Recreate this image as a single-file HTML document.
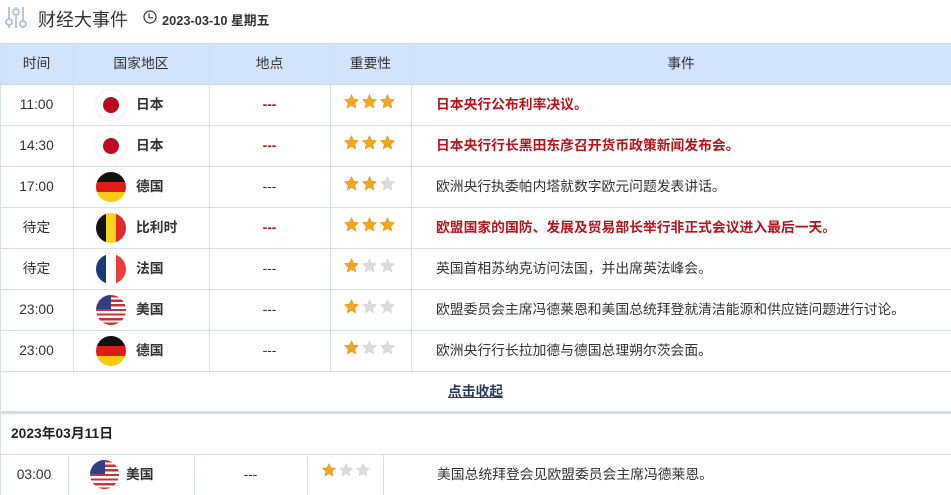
<!DOCTYPE html>
<html><head><meta charset="utf-8"><style>
*{margin:0;padding:0;box-sizing:border-box}
body{width:951px;height:495px;background:#fff;font-family:"Liberation Sans","Noto Sans CJK SC",sans-serif;font-size:13.8px;color:#333;position:relative;overflow:hidden}
.a{position:absolute}
.hl{position:absolute;left:0;width:951px;height:1px;background:#d6dfea}
.vl{position:absolute;width:1px;background:#d6dfea}
.c{position:absolute;text-align:center;line-height:41px;height:41px;white-space:nowrap}
.flag{position:absolute;width:30px;height:30px;border-radius:50%;overflow:hidden}
.red{color:#b4161b;font-weight:bold}
.st{position:absolute;width:52px;height:15px}
.o{fill:#f5a623;stroke:#e08d10;stroke-width:.6}.g{fill:#dcdcdc;stroke:#d0d0d0;stroke-width:.6}
</style></head><body>
<svg width="0" height="0" style="position:absolute"><defs><symbol id="s" viewBox="0 0 16 16"><path d="M8 .8l2.2 4.7 5.1.6-3.8 3.5 1 5.1L8 12.2l-4.5 2.5 1-5.1L.7 6.1l5.1-.6z"/></symbol></defs></svg>
<svg class="a" style="left:3px;top:3px" width="28" height="28" viewBox="0 0 28 28" fill="none" stroke="#a9b8d6" stroke-width="1.6">
<line x1="6" y1="4" x2="6" y2="16"/><circle cx="6" cy="19" r="3"/><line x1="6" y1="22" x2="6" y2="25"/>
<line x1="13" y1="4" x2="13" y2="6"/><circle cx="13" cy="9" r="3"/><line x1="13" y1="12" x2="13" y2="25"/>
<line x1="20" y1="4" x2="20" y2="18"/><circle cx="20" cy="21" r="3"/><line x1="20" y1="24" x2="20" y2="25"/>
</svg>
<div class="a" style="left:38px;top:6px;font-size:18px;color:#333">财经大事件</div>
<svg class="a" style="left:143px;top:10px" width="14" height="14" viewBox="0 0 14 14" fill="none" stroke="#333" stroke-width="1.2"><circle cx="7" cy="7" r="6"/><path d="M6 3.5V7.8H10"/></svg>
<div class="a" style="left:162px;top:10px;font-size:12.8px;font-weight:bold;color:#333">2023-03-10 星期五</div>

<div class="a" style="left:0;top:44px;width:951px;height:40px;background:#d3e3fb"></div>
<div class="hl" style="top:43px;background:#c9d6ea"></div>
<div class="c" style="left:0;top:43px;width:73px">时间</div>
<div class="c" style="left:73px;top:43px;width:136px">国家地区</div>
<div class="c" style="left:209px;top:43px;width:121px">地点</div>
<div class="c" style="left:330px;top:43px;width:81px">重要性</div>
<div class="c" style="left:411px;top:43px;width:540px">事件</div>

<div class="hl" style="top:84px;background:#c9d6ea"></div>
<div class="hl" style="top:125px"></div><div class="hl" style="top:166px"></div><div class="hl" style="top:207px"></div><div class="hl" style="top:248px"></div><div class="hl" style="top:289px"></div><div class="hl" style="top:330px"></div><div class="hl" style="top:371px"></div>
<div class="a" style="left:0;top:411px;width:951px;height:3px;background:#d3dce9"></div>
<div class="hl" style="top:454px"></div>
<div class="vl" style="left:0;top:43px;height:452px"></div>
<div class="vl" style="left:73px;top:43px;height:328px"></div>
<div class="vl" style="left:209px;top:43px;height:328px"></div>
<div class="vl" style="left:330px;top:43px;height:328px"></div>
<div class="vl" style="left:411px;top:43px;height:328px"></div>
<div class="vl" style="left:68px;top:454px;height:41px"></div>
<div class="vl" style="left:194px;top:454px;height:41px"></div>
<div class="vl" style="left:307px;top:454px;height:41px"></div>
<div class="vl" style="left:383px;top:454px;height:41px"></div>

<div class="c" style="left:0;top:84px;width:73px">11:00</div>
<div class="flag" style="left:96px;top:90px;background:#fff;box-shadow:0 0 2px #ddd"><div style="position:absolute;left:7px;top:7px;width:16px;height:16px;border-radius:50%;background:#bc0a24"></div></div>
<div class="c" style="left:136px;top:84px;font-weight:bold">日本</div>
<div class="c red" style="left:209px;top:84px;width:121px">---</div>
<svg class="st" style="left:344px;top:94px"><use href="#s" class="o" x="0" width="15" height="15"/><use href="#s" class="o" x="18" width="15" height="15"/><use href="#s" class="o" x="36" width="15" height="15"/></svg>
<div class="c red" style="left:436px;top:84px">日本央行公布利率决议。</div>

<div class="c" style="left:0;top:125px;width:73px">14:30</div>
<div class="flag" style="left:96px;top:131px;background:#fff;box-shadow:0 0 2px #ddd"><div style="position:absolute;left:7px;top:7px;width:16px;height:16px;border-radius:50%;background:#bc0a24"></div></div>
<div class="c" style="left:136px;top:125px;font-weight:bold">日本</div>
<div class="c red" style="left:209px;top:125px;width:121px">---</div>
<svg class="st" style="left:344px;top:135px"><use href="#s" class="o" x="0" width="15" height="15"/><use href="#s" class="o" x="18" width="15" height="15"/><use href="#s" class="o" x="36" width="15" height="15"/></svg>
<div class="c red" style="left:436px;top:125px">日本央行行长黑田东彦召开货币政策新闻发布会。</div>

<div class="c" style="left:0;top:166px;width:73px">17:00</div>
<div class="flag" style="left:96px;top:172px;background:linear-gradient(#111 0 33%,#dd1c1c 33% 66%,#f6cb10 66%)"></div>
<div class="c" style="left:136px;top:166px;font-weight:bold">德国</div>
<div class="c" style="left:209px;top:166px;width:121px">---</div>
<svg class="st" style="left:344px;top:176px"><use href="#s" class="o" x="0" width="15" height="15"/><use href="#s" class="o" x="18" width="15" height="15"/><use href="#s" class="g" x="36" width="15" height="15"/></svg>
<div class="c" style="left:436px;top:166px">欧洲央行执委帕内塔就数字欧元问题发表讲话。</div>

<div class="c" style="left:0;top:207px;width:73px">待定</div>
<div class="flag" style="left:96px;top:213px;background:linear-gradient(90deg,#111 0 33%,#f8d51a 33% 66%,#e12a2a 66%)"></div>
<div class="c" style="left:136px;top:207px;font-weight:bold">比利时</div>
<div class="c red" style="left:209px;top:207px;width:121px">---</div>
<svg class="st" style="left:344px;top:217px"><use href="#s" class="o" x="0" width="15" height="15"/><use href="#s" class="o" x="18" width="15" height="15"/><use href="#s" class="o" x="36" width="15" height="15"/></svg>
<div class="c red" style="left:436px;top:207px">欧盟国家的国防、发展及贸易部长举行非正式会议进入最后一天。</div>

<div class="c" style="left:0;top:248px;width:73px">待定</div>
<div class="flag" style="left:96px;top:254px;background:linear-gradient(90deg,#1a3b7a 0 33%,#fff 33% 66%,#ee3b3b 66%)"></div>
<div class="c" style="left:136px;top:248px;font-weight:bold">法国</div>
<div class="c" style="left:209px;top:248px;width:121px">---</div>
<svg class="st" style="left:344px;top:258px"><use href="#s" class="o" x="0" width="15" height="15"/><use href="#s" class="g" x="18" width="15" height="15"/><use href="#s" class="g" x="36" width="15" height="15"/></svg>
<div class="c" style="left:436px;top:248px">英国首相苏纳克访问法国，并出席英法峰会。</div>

<div class="c" style="left:0;top:289px;width:73px">23:00</div>
<div class="flag" style="left:96px;top:295px;background:repeating-linear-gradient(#c8303a 0 2.3px,#fff 2.3px 4.6px)"><div style="position:absolute;left:0;top:0;width:15px;height:14px;background:#2e3f86"></div></div>
<div class="c" style="left:136px;top:289px;font-weight:bold">美国</div>
<div class="c" style="left:209px;top:289px;width:121px">---</div>
<svg class="st" style="left:344px;top:299px"><use href="#s" class="o" x="0" width="15" height="15"/><use href="#s" class="g" x="18" width="15" height="15"/><use href="#s" class="g" x="36" width="15" height="15"/></svg>
<div class="c" style="left:436px;top:289px">欧盟委员会主席冯德莱恩和美国总统拜登就清洁能源和供应链问题进行讨论。</div>

<div class="c" style="left:0;top:330px;width:73px">23:00</div>
<div class="flag" style="left:96px;top:336px;background:linear-gradient(#111 0 33%,#dd1c1c 33% 66%,#f6cb10 66%)"></div>
<div class="c" style="left:136px;top:330px;font-weight:bold">德国</div>
<div class="c" style="left:209px;top:330px;width:121px">---</div>
<svg class="st" style="left:344px;top:340px"><use href="#s" class="o" x="0" width="15" height="15"/><use href="#s" class="g" x="18" width="15" height="15"/><use href="#s" class="g" x="36" width="15" height="15"/></svg>
<div class="c" style="left:436px;top:330px">欧洲央行行长拉加德与德国总理朔尔茨会面。</div>

<div class="c" style="left:0;top:371px;width:951px;font-weight:bold;color:#2b3a5c;text-decoration:underline">点击收起</div>
<div class="c" style="left:11px;top:413px;font-weight:bold;color:#222">2023年03月11日</div>

<div class="c" style="left:0;top:454px;width:68px">03:00</div>
<div class="flag" style="left:90px;top:460px;width:29px;height:29px;background:repeating-linear-gradient(#c8303a 0 2.3px,#fff 2.3px 4.6px)"><div style="position:absolute;left:0;top:0;width:15px;height:14px;background:#2e3f86"></div></div>
<div class="c" style="left:126px;top:454px;font-weight:bold">美国</div>
<div class="c" style="left:194px;top:454px;width:113px">---</div>
<svg class="st" style="left:322px;top:463px"><use href="#s" class="o" x="0" width="14" height="14"/><use href="#s" class="g" x="17" width="14" height="14"/><use href="#s" class="g" x="34" width="14" height="14"/></svg>
<div class="c" style="left:437px;top:454px">美国总统拜登会见欧盟委员会主席冯德莱恩。</div>
</body></html>
